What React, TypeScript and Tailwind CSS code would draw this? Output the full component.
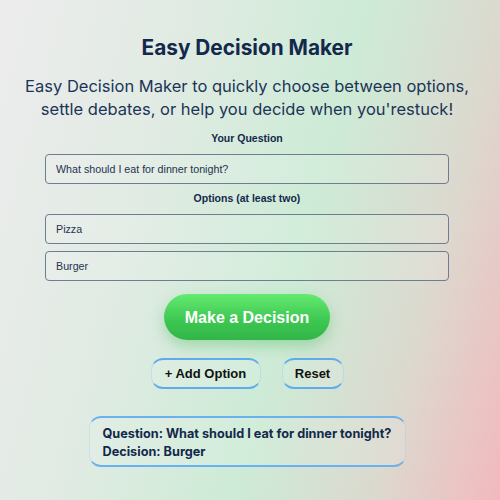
import { useState } from "react";

const headingFont = { fontFamily: "Inter, 'DejaVu Sans', sans-serif" };

export default function App() {
  const [question] = useState("What should I eat for dinner tonight?");
  const [options] = useState(["Pizza", "Burger"]);

  return (
    <div className="w-[500px] h-[500px] overflow-hidden bg-[linear-gradient(105deg,#ececec_0%,#e2ebe4_28%,#cdebd6_58%,#dcd9cf_80%,#f2b9bd_100%)]">
      <div className="w-[494px] flex flex-col items-center pt-[34px] font-['Liberation_Sans',Arial,sans-serif]">
        <h1 style={headingFont} className="text-[20.8px] leading-[28px] font-bold text-[#13294b]">
          Easy Decision Maker
        </h1>
        <p style={headingFont} className="mt-[13px] text-[16.5px] leading-[23px] text-[#1c3557] text-center">
          Easy Decision Maker to quickly choose between options,
          <br />
          settle debates, or help you decide when you'restuck!
        </p>

        <label className="mt-[10px] text-[10.5px] leading-[15px] font-bold text-[#13294b]">Your Question</label>
        <input
          readOnly
          value={question}
          className="mt-[8px] w-[404px] h-[30px] px-[10px] text-[10.7px] text-[#24344d] bg-white/10 border border-[#6f7d92] rounded-[4px] outline-none"
        />

        <label className="mt-[7px] text-[10.5px] leading-[15px] font-bold text-[#13294b]">Options (at least two)</label>
        <div className="mt-[8px] flex flex-col gap-[7px]">
          {options.map((opt) => (
            <input
              key={opt}
              readOnly
              value={opt}
              className="w-[404px] h-[30px] px-[10px] text-[10.7px] text-[#24344d] bg-white/10 border border-[#6f7d92] rounded-[4px] outline-none"
            />
          ))}
        </div>

        <button className="mt-[13px] w-[166px] h-[46px] pt-[2px] rounded-full bg-[linear-gradient(180deg,#63ea70_0%,#3cc650_60%,#33b548_100%)] text-white text-[16px] font-bold shadow-[0_6px_14px_rgba(60,180,80,0.35)]">
          Make a Decision
        </button>

        <div className="mt-[18px] flex gap-[21px]">
          <button className="w-[110px] h-[31px] rounded-[12px] border-y-2 border-x border-y-[#5eacee] border-x-[#5eacee]/20 bg-white/10 text-[13px] font-bold text-[#111]">
            + Add Option
          </button>
          <button className="w-[62px] h-[31px] rounded-[12px] border-y-2 border-x border-y-[#5eacee] border-x-[#5eacee]/20 bg-white/10 text-[13px] font-bold text-[#111]">
            Reset
          </button>
        </div>

        <div
          style={headingFont}
          className="mt-[27px] w-[317px] h-[51px] pl-[13px] pr-[4px] py-[7px] rounded-[12px] border-y-2 border-x border-y-[#6ab2ef] border-x-[#6ab2ef]/20 bg-white/10 text-[12.7px] leading-[18px] font-bold text-[#13294b] whitespace-nowrap"
        >
          <div>Question: {question}</div>
          <div>Decision: Burger</div>
        </div>
      </div>
    </div>
  );
}
